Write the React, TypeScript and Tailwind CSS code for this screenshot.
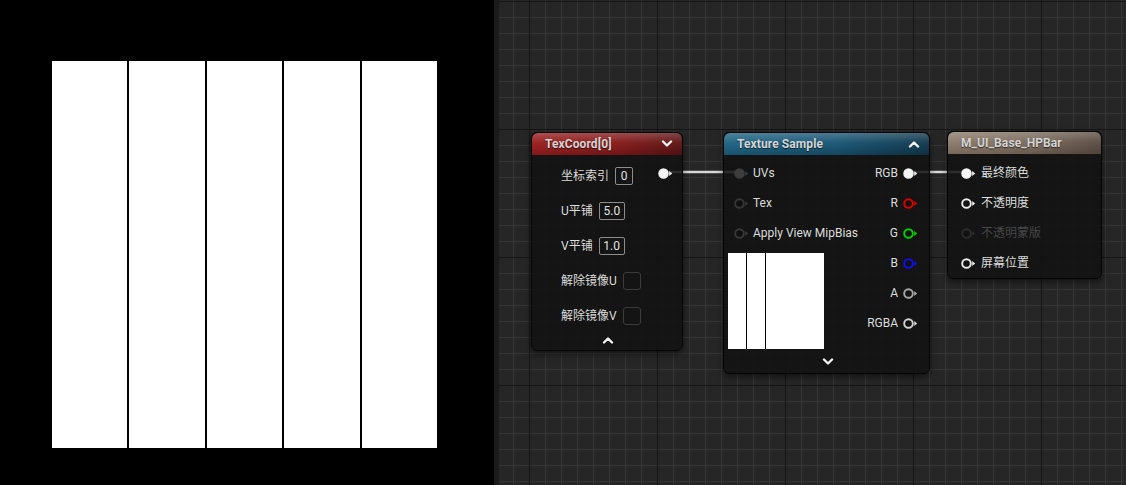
import React from "react"

const FONT = "font-[Roboto,'Noto_Sans_CJK_SC',sans-serif]"

function Pin({ stroke, fill }: { stroke: string; fill: string }) {
  return (
    <svg width="15" height="11" viewBox="0 0 15 11" className="shrink-0">
      <circle cx="5.5" cy="5.5" r="4.3" fill={fill} stroke={stroke} strokeWidth="1.9" />
      <path d="M11.2 3 L14.2 5.5 L11.2 8 Z" fill={stroke} />
    </svg>
  )
}

function Chevron({ up }: { up?: boolean }) {
  return (
    <svg width="12" height="8" viewBox="0 0 12 8">
      <polyline
        points={up ? "2,6.5 6,2.5 10,6.5" : "2,1.5 6,5.5 10,1.5"}
        fill="none"
        stroke="#f2f2f2"
        strokeWidth="2.4"
        strokeLinecap="round"
        strokeLinejoin="round"
      />
    </svg>
  )
}

function NodeHeader({ title, className, up }: { title: string; className: string; up?: boolean }) {
  return (
    <div
      className={`relative flex h-[22px] items-center justify-between rounded-t-[6px] pl-[13px] pr-[9px] ${className}`}
    >
      <div className="pointer-events-none absolute inset-0 rounded-t-[6px] bg-[linear-gradient(to_bottom,rgba(255,255,255,0.22),rgba(255,255,255,0.04)_45%,rgba(0,0,0,0.15))]" />
      <span className="relative text-[12px] font-bold tracking-[0.1px] text-[#d4d4d4] [text-shadow:0_1px_1px_rgba(0,0,0,0.6)]">
        {title}
      </span>
      {up !== undefined ? (
        <span className="relative">
          <Chevron up={up} />
        </span>
      ) : null}
    </div>
  )
}

function ValueBox({ value, w }: { value: string; w: string }) {
  return (
    <span
      className={`flex h-[18px] items-center justify-center rounded-[2px] border border-[#8c8c8c] text-[12px] text-[#e2e2e2] ${w}`}
    >
      {value}
    </span>
  )
}

function CheckBox() {
  return <span className="h-[18px] w-[18px] rounded-[3px] border border-[#3c3c3c] bg-[#141414]" />
}

function TexCoordNode() {
  const rows: { label: string; control: React.ReactNode }[] = [
    { label: "坐标索引", control: <ValueBox value="0" w="w-[18px]" /> },
    { label: "U平铺", control: <ValueBox value="5.0" w="w-[26px]" /> },
    { label: "V平铺", control: <ValueBox value="1.0" w="w-[26px]" /> },
    { label: "解除镜像U", control: <CheckBox /> },
    { label: "解除镜像V", control: <CheckBox /> },
  ]
  return (
    <div className="absolute left-[32px] top-[132px] flex h-[219px] w-[152px] flex-col rounded-[6px] border border-[#050505] bg-[#111211]/[0.88] shadow-[0_3px_6px_rgba(0,0,0,0.5)]">
      <NodeHeader
        title="TexCoord[0]"
        className="bg-[linear-gradient(to_right,#9a1c1c,#861818_55%,#5c1212)]"
        up={false}
      />
      <div className="flex justify-between pt-[3px]">
        <div className="flex flex-col pl-[29px]">
          {rows.map((r) => (
            <div key={r.label} className="flex h-[35px] items-center gap-[6px]">
              <span className="text-[12px] text-[#dcdcdc]">{r.label}</span>
              {r.control}
            </div>
          ))}
        </div>
        <div className="pr-[9px] pt-[10px]">
          <Pin stroke="#f4f4f4" fill="#f4f4f4" />
        </div>
      </div>
      <div className="flex flex-1 items-center justify-center pb-[3px] pl-[2px]">
        <Chevron up />
      </div>
    </div>
  )
}

function TextureSampleNode() {
  const inputs = [
    { label: "UVs", stroke: "#3d3d3d", fill: "#3d3d3d" },
    { label: "Tex", stroke: "#383838", fill: "#101010" },
    { label: "Apply View MipBias", stroke: "#383838", fill: "#101010" },
  ]
  const outputs = [
    { label: "RGB", stroke: "#f4f4f4", fill: "#f4f4f4" },
    { label: "R", stroke: "#e00000", fill: "#121212" },
    { label: "G", stroke: "#00d400", fill: "#121212" },
    { label: "B", stroke: "#1010f0", fill: "#121212" },
    { label: "A", stroke: "#a8a8a8", fill: "#121212" },
    { label: "RGBA", stroke: "#d4d4d4", fill: "#121212" },
  ]
  return (
    <div className="absolute left-[224px] top-[132px] flex h-[242px] w-[207px] flex-col rounded-[6px] border border-[#050505] bg-[#111211]/[0.88] shadow-[0_3px_6px_rgba(0,0,0,0.5)]">
      <NodeHeader
        title="Texture Sample"
        className="bg-[linear-gradient(to_right,#1c6282,#175372_55%,#0e364c)]"
        up
      />
      <div className="flex justify-between pt-[3px]">
        <div className="flex flex-col">
          {inputs.map((p) => (
            <div key={p.label} className="flex h-[30px] items-center gap-[4px] pl-[10px]">
              <Pin stroke={p.stroke} fill={p.fill} />
              <span className="text-[12px] text-[#dcdcdc]">{p.label}</span>
            </div>
          ))}
          <div className="ml-[4px] mt-[5px] flex h-[96px] w-[96px] gap-[1px] bg-black">
            <div className="w-[18px] bg-white" />
            <div className="w-[18px] bg-white" />
            <div className="flex-1 bg-white" />
          </div>
        </div>
        <div className="flex flex-col items-end pr-[11px]">
          {outputs.map((p) => (
            <div key={p.label} className="flex h-[30px] items-center gap-[5px]">
              <span className="text-[12px] text-[#dcdcdc]">{p.label}</span>
              <Pin stroke={p.stroke} fill={p.fill} />
            </div>
          ))}
        </div>
      </div>
      <div className="flex flex-1 items-center justify-center pt-[2px] pl-[2px]">
        <Chevron />
      </div>
    </div>
  )
}

function MaterialNode() {
  const inputs = [
    { label: "最终颜色", stroke: "#f4f4f4", fill: "#f4f4f4", text: "text-[#dcdcdc]" },
    { label: "不透明度", stroke: "#ececec", fill: "#111111", text: "text-[#dcdcdc]" },
    { label: "不透明蒙版", stroke: "#2c2c2c", fill: "#111111", text: "text-[#474747]" },
    { label: "屏幕位置", stroke: "#ececec", fill: "#111111", text: "text-[#dcdcdc]" },
  ]
  return (
    <div className="absolute left-[448px] top-[131px] flex h-[148px] w-[155px] flex-col rounded-[6px] border border-[#050505] bg-[#111211]/[0.88] shadow-[0_3px_6px_rgba(0,0,0,0.5)]">
      <NodeHeader
        title="M_UI_Base_HPBar"
        className="bg-[linear-gradient(to_right,#8c7b6a,#7a6a5c_55%,#5a4c43)]"
      />
      <div className="flex flex-col pt-[4px]">
        {inputs.map((p) => (
          <div key={p.label} className="flex h-[30px] items-center gap-[5px] pl-[13px]">
            <Pin stroke={p.stroke} fill={p.fill} />
            <span className={`text-[12px] ${p.text}`}>{p.label}</span>
          </div>
        ))}
      </div>
    </div>
  )
}

export default function App() {
  return (
    <div className={`flex h-[485px] w-[1126px] overflow-hidden bg-black ${FONT}`}>
      {/* texture preview viewport */}
      <div className="h-full w-[494px] shrink-0 bg-black pl-[52px] pt-[61px]">
        <div className="flex h-[387px] w-[385px] gap-[2px] bg-black">
          <div className="flex-1 bg-white" />
          <div className="flex-1 bg-white" />
          <div className="flex-1 bg-white" />
          <div className="flex-1 bg-white" />
          <div className="flex-1 bg-white" />
        </div>
      </div>
      <div className="h-full w-[5px] shrink-0 bg-[#1b1b1b]" />
      {/* material graph */}
      <div className="relative h-full flex-1 bg-[#262626] bg-[linear-gradient(to_right,#151515_1px,transparent_1px),linear-gradient(to_bottom,#151515_1px,transparent_1px),linear-gradient(to_right,#353535_1px,transparent_1px),linear-gradient(to_bottom,#353535_1px,transparent_1px)] bg-[size:128px_128px,128px_128px,16px_16px,16px_16px] bg-[position:30px_1px,30px_1px,14px_1px,14px_1px]">
        <svg className="pointer-events-none absolute inset-0 h-full w-full">
          <line x1="165" y1="172" x2="240" y2="172" stroke="#d8d8d8" strokeWidth="2.4" />
          <line x1="412" y1="172" x2="467" y2="172" stroke="#d8d8d8" strokeWidth="2.4" />
        </svg>
        <TexCoordNode />
        <TextureSampleNode />
        <MaterialNode />
      </div>
    </div>
  )
}
